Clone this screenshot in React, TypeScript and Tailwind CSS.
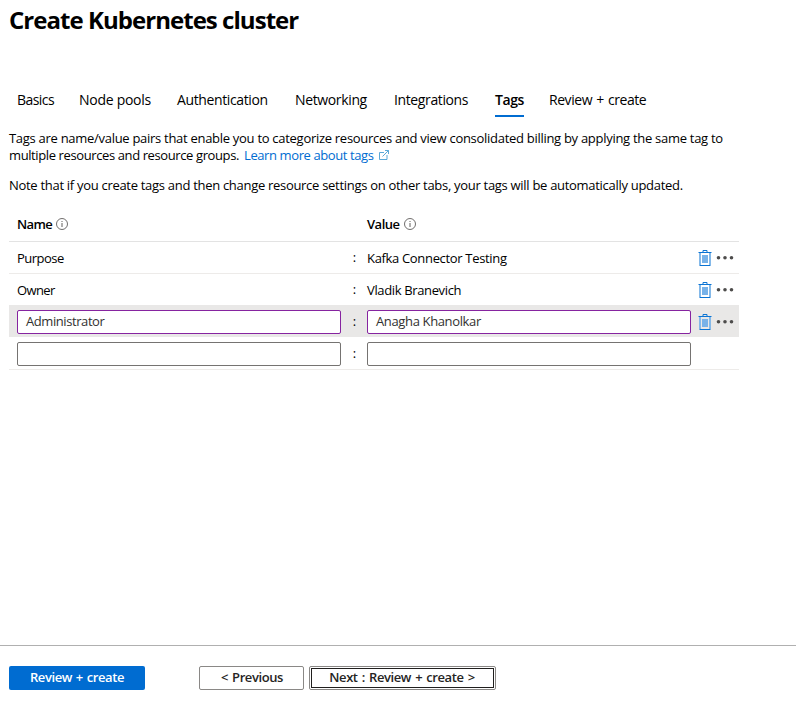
import React from "react";

const tabs = [
  { label: "Basics", box: "w-[38px] mr-[24px]", tracking: "tracking-[-0.55px]" },
  { label: "Node pools", box: "w-[73px] mr-[25px]", tracking: "tracking-[-0.28px]" },
  { label: "Authentication", box: "w-[92px] mr-[26px]", tracking: "tracking-[-0.38px]" },
  { label: "Networking", box: "w-[73px] mr-[26px]", tracking: "tracking-[-0.36px]" },
  { label: "Integrations", box: "w-[75px] mr-[26px]", tracking: "tracking-[-0.38px]" },
  { label: "Tags", box: "w-[29px] mr-[25px]", tracking: "tracking-[-0.4px]", active: true },
  { label: "Review + create", box: "w-[100px]", tracking: "tracking-[-0.45px] [word-spacing:1px]" },
];

function InfoIcon() {
  return (
    <svg width="12" height="12" viewBox="0 0 12 12" fill="none">
      <circle cx="6" cy="6" r="5.5" stroke="#605e5c" strokeWidth="0.9" />
      <path d="M6 5v4M6 3v1" stroke="#605e5c" strokeWidth="1" />
    </svg>
  );
}

function ExternalIcon() {
  return (
    <svg width="12" height="12" viewBox="0 0 12 12" fill="none" stroke="#4a9fd4" strokeWidth="0.9">
      <path d="M6 3.5H1.5v7H9V6" />
      <path d="M4.5 7.5l6-6M7 1.5h3.5V5" />
    </svg>
  );
}

function TrashIcon() {
  return (
    <svg width="14" height="16" viewBox="0 0 14 16" fill="none">
      <path d="M5 2V.5h4V2" stroke="#0b74d4" />
      <path d="M2 3v12M12 3v12" stroke="#84b9e9" strokeWidth="2" />
      <path d="M.5 2.5h13" stroke="#0b74d4" />
      <path d="M1.5 15.5h11" stroke="#0b74d4" />
      <path d="M4 5h6v8H4z" fill="#78b2e8" />
    </svg>
  );
}

function MoreIcon() {
  return (
    <svg width="18" height="4" viewBox="0 0 18 4" fill="#4d4c4b">
      <circle cx="2.5" cy="1.8" r="1.8" />
      <circle cx="9" cy="1.8" r="1.8" />
      <circle cx="15.5" cy="1.8" r="1.8" />
    </svg>
  );
}

function Actions() {
  return (
    <div className="flex items-center pl-[7px]">
      <TrashIcon />
      <span className="ml-1">
        <MoreIcon />
      </span>
    </div>
  );
}

function Row({ name, value, namePitch, valuePitch }: { name: string; value: string; namePitch: string; valuePitch: string }) {
  return (
    <div className="flex h-8 items-center border-b border-[#edebe9] pl-2">
      <div className={`w-[324px] pt-[2px] ${namePitch}`}>{name}</div>
      <div className="w-[26px] pl-px text-center">:</div>
      <div className={`w-[324px] pt-[2px] ${valuePitch}`}>{value}</div>
      <Actions />
    </div>
  );
}

export default function App() {
  return (
    <div className="flex h-[714px] w-[796px] flex-col overflow-hidden bg-white font-['Open_Sans','Noto_Sans',sans-serif] text-[13px] leading-[17px] whitespace-nowrap text-black">
      <h1 className="mt-[4px] ml-[9px] h-8 text-[24px] leading-8 font-bold tracking-[-0.96px]">Create Kubernetes cluster</h1>
      <nav className="mt-[55px] flex h-[26px] pl-[17px] text-[14px] leading-[18px]">
        {tabs.map((t) => (
          <div
            key={t.label}
            className={`${t.box} ${t.tracking} ${t.active ? "border-b-2 border-[#006cd1] font-semibold" : ""}`}
          >
            {t.label}
          </div>
        ))}
      </nav>
      <div className="mt-[13px] ml-[9px]">
        <p className="tracking-[-0.287px]">
          Tags are name/value pairs that enable you to categorize resources and view consolidated billing by applying the same tag to
        </p>
        <div className="flex">
          <span className="w-[235px] tracking-[-0.39px]">multiple resources and resource groups.</span>
          <a className="w-[134px] tracking-[-0.4px] text-[#006cd1]">Learn more about tags</a>
          <span className="mt-[2px]">
            <ExternalIcon />
          </span>
        </div>
        <p className="mt-[13px] tracking-[-0.295px]">
          Note that if you create tags and then change resource settings on other tabs, your tags will be automatically updated.
        </p>
      </div>
      <div className="mt-[13px] ml-[9px] w-[730px]">
        <div className="flex h-[35px] items-center border-b border-[#e3e3e3] pl-2 font-semibold">
          <div className="flex w-[350px] items-center">
            <span className="w-[39px] tracking-[-0.6px]">Name</span>
            <InfoIcon />
          </div>
          <span className="w-[37px] tracking-[-0.5px]">Value</span>
          <InfoIcon />
        </div>
        <Row name="Purpose" value="Kafka Connector Testing" namePitch="tracking-[-0.53px]" valuePitch="tracking-[-0.33px]" />
        <Row name="Owner" value="Vladik Branevich" namePitch="tracking-[-0.6px]" valuePitch="tracking-[-0.36px]" />
        <div className="-mt-px flex h-8 items-center bg-[#e9e8e7] pt-px pl-2">
          <div className="h-6 w-[324px] rounded-[2px] border border-[#8624a0] bg-white pl-2 leading-[21px] tracking-[-0.42px] text-[#323130]">
            Administrator
          </div>
          <div className="w-[26px] pl-px text-center">:</div>
          <div className="h-6 w-[324px] rounded-[2px] border border-[#8624a0] bg-white pl-2 leading-[21px] tracking-[-0.36px] text-[#323130]">
            Anagha Khanolkar
          </div>
          <Actions />
        </div>
        <div className="flex h-[33px] items-center border-b border-[#edebe9] pt-px pl-2">
          <div className="h-6 w-[324px] rounded-[2px] border border-[#757371]" />
          <div className="w-[26px] pl-px text-center">:</div>
          <div className="h-6 w-[324px] rounded-[2px] border border-[#757371]" />
        </div>
      </div>
      <footer className="mt-auto flex h-[69px] border-t border-[#b0b0b0] pt-5 pl-[9px] font-semibold tracking-[-0.42px] text-[#252423]">
        <button className="h-6 w-[136px] rounded-[2px] bg-[#006cd1] pb-[2px] text-white [word-spacing:1px]">Review + create</button>
        <button className="ml-[54px] h-6 w-[105px] rounded-[2px] border border-[#8a8886] pb-[2px] pl-px [word-spacing:1px]">&lt; Previous</button>
        <button className="ml-[5px] h-6 w-[187px] rounded-[2px] border border-[#8a8886] p-px">
          <span className="flex h-5 items-center justify-center border border-[#201f1e] pr-px pb-[2px] [word-spacing:1.2px]">Next : Review + create &gt;</span>
        </button>
      </footer>
    </div>
  );
}
